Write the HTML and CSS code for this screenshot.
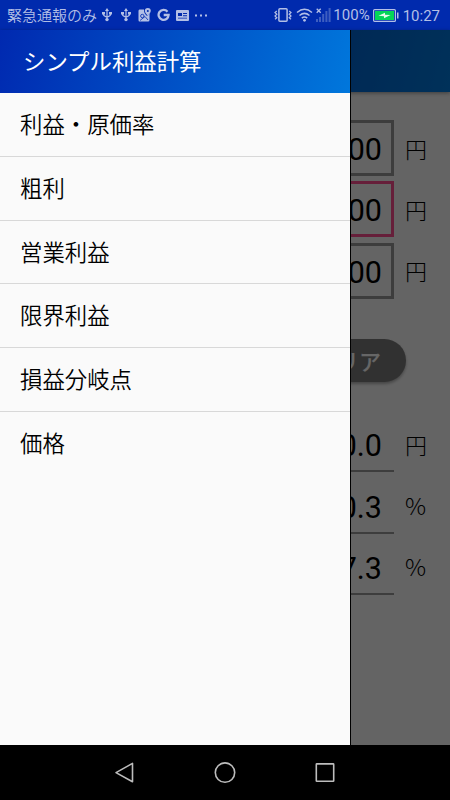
FILE: index.html
```html
<!DOCTYPE html>
<html lang="ja">
  <head>
    <meta charset="UTF-8" />
    <meta name="viewport" content="width=device-width, initial-scale=1.0" />
    <title>シンプル利益計算</title>
    <link rel="stylesheet" href="styles.css">
  </head>
  <body>
    <div class="status-bar">
      <div class="status-left">
        <span class="carrier">緊急通報のみ</span>
        <svg class="icon-usb" width="10" height="14" viewBox="0 0 10 14">
          <path d="M5 2v9M1.500 5v1.500q0 1.500 3.500 2.600q3.500-1.100 3.500-2.600V5" fill="none" stroke="currentColor" stroke-width="1.200" />
          <path d="M5 0l2 3H3zM0 4h3v2.500H0zM7 4h3v2.500H7z" fill="currentColor" />
          <circle cx="5" cy="11.600" r="1.700" fill="currentColor" />
        </svg>
        <svg class="icon-usb" width="10" height="14" viewBox="0 0 10 14">
          <path d="M5 2v9M1.500 5v1.500q0 1.500 3.500 2.600q3.500-1.100 3.500-2.600V5" fill="none" stroke="currentColor" stroke-width="1.200" />
          <path d="M5 0l2 3H3zM0 4h3v2.500H0zM7 4h3v2.500H7z" fill="currentColor" />
          <circle cx="5" cy="11.600" r="1.700" fill="currentColor" />
        </svg>
        <svg class="icon-map" width="13" height="14" viewBox="0 0 13 14">
          <path d="M1.500 1.500H6q-.4 3.500 3 6.500q1.200-.8 2.500-2.500V12q0 1.500-1.500 1.500H1.500Q.5 13.500.5 12V3q0-1.500 1-1.500z" fill="currentColor" />
          <path d="M9.800 0a3 3 0 0 1 3 3q0 1.800-3 4.800q-3-3-3-4.800a3 3 0 0 1 3-3z" fill="currentColor" />
          <circle cx="9.800" cy="2.900" r="1" fill="#002aad" />
          <circle cx="4.300" cy="8" r="1.700" fill="none" stroke="#002aad" stroke-width=".8" />
          <path d="M2 12.500l5-4l3 3.500" fill="none" stroke="#002aad" stroke-width=".8" />
        </svg>
        <svg class="icon-g" width="13" height="14" viewBox="0 0 13 14">
          <path d="M10.500 3.700A5 5 0 1 0 11.600 7H6.700" fill="none" stroke="currentColor" stroke-width="2.300" />
        </svg>
        <svg class="icon-news" width="13" height="11" viewBox="0 0 13 11">
          <rect width="13" height="11" rx="1" fill="currentColor" />
          <path d="M2 3h4v3H2zM7 3h4v1H7zM7 5.200h4v1H7zM2 7.800h9v.8H2z" fill="#002aad" />
        </svg>
        <svg class="icon-more" width="12" height="3" viewBox="0 0 12 3">
          <path d="M0 .5h2v2H0zM5 .5h2v2H5zM10 .5h2v2h-2z" fill="currentColor" />
        </svg>
      </div>
      <div class="status-right">
        <svg class="icon-vibrate" width="18" height="14" viewBox="0 0 18 14">
          <rect x="4.900" y=".8" width="8.200" height="12.400" rx="1" fill="none" stroke="currentColor" stroke-width="1.500" />
          <path d="M2.800 3L1 4.500l1.800 1.700L1 8l1.800 1.700L1 11.200M15.200 3L17 4.500l-1.800 1.700L17 8l-1.800 1.700l1.800 1.500" fill="none" stroke="currentColor" stroke-width="1.200" />
        </svg>
        <svg class="icon-wifi" width="17" height="14" viewBox="0 0 17 14">
          <path d="M1 4.500q7.500-6.500 15 0M3.500 7.500q5-4.200 10 0M5.800 10.200q2.700-2.200 5.400 0" fill="none" stroke="currentColor" stroke-width="1.500" />
          <circle cx="8.500" cy="12.300" r="1.400" fill="currentColor" />
        </svg>
        <svg class="icon-signal" width="15" height="14" viewBox="0 0 15 14">
          <path d="M.7.700l4 4M4.700.7l-4 4" stroke="currentColor" stroke-width="1.300" />
          <path d="M0 11h2v3H0zM3 9h2v5H3zM6.200 6h2v8h-2zM9.400 3h2v11h-2zM12.600 0h2v14h-2z" fill="currentColor" opacity=".35" />
        </svg>
        <span class="battery-level">100%</span>
        <svg class="icon-battery" width="26" height="13" viewBox="0 0 26 13">
          <rect x=".6" y=".6" width="21.800" height="11.800" rx="1" fill="none" stroke="currentColor" stroke-width="1.200" />
          <rect x="2" y="2" width="19" height="9" fill="#04d558" />
          <path d="M5.500 6.800l6.500-3v2l5.500.3l-6.500 3.100V7.200z" fill="#e4fbea" />
          <path d="M24 3.500h1.500v6H24z" fill="currentColor" />
        </svg>
        <span class="clock">10:27</span>
      </div>
    </div>

    <div class="screen">
      <main class="content">
        <header class="app-bar"></header>
        <form class="calc">
          <div class="calc-row">
            <div class="field">1000</div>
            <span class="unit">円</span>
          </div>
          <div class="calc-row">
            <div class="field field-active">700</div>
            <span class="unit">円</span>
          </div>
          <div class="calc-row">
            <div class="field">100</div>
            <span class="unit">円</span>
          </div>
          <div class="calc-actions">
            <button type="button" class="btn-clear">クリア</button>
          </div>
          <div class="calc-row">
            <div class="result">300.0</div>
            <span class="unit">円</span>
          </div>
          <div class="calc-row">
            <div class="result">30.3</div>
            <span class="unit unit-percent">%</span>
          </div>
          <div class="calc-row">
            <div class="result">67.3</div>
            <span class="unit unit-percent">%</span>
          </div>
        </form>
      </main>

      <div class="scrim"></div>

      <nav class="drawer">
        <h1 class="drawer-title">シンプル利益計算</h1>
        <ul class="drawer-menu">
          <li>利益・原価率</li>
          <li>粗利</li>
          <li>営業利益</li>
          <li>限界利益</li>
          <li>損益分岐点</li>
          <li>価格</li>
        </ul>
      </nav>
    </div>

    <div class="nav-bar">
      <svg width="22" height="22" viewBox="0 0 22 22">
        <path d="M18.500 1.400v18.400L2 10.600z" fill="none" stroke="#bdbdbd" stroke-width="1.600" stroke-linejoin="round" />
      </svg>
      <svg width="22" height="22" viewBox="0 0 22 22">
        <circle cx="11" cy="10.600" r="9.700" fill="none" stroke="#bdbdbd" stroke-width="1.600" />
      </svg>
      <svg width="22" height="22" viewBox="0 0 22 22">
        <rect x="2.300" y="1.900" width="17.400" height="17.400" rx=".5" fill="none" stroke="#bdbdbd" stroke-width="1.600" />
      </svg>
    </div>
  </body>
</html>
```
FILE: styles.css
```css
* {
  box-sizing: border-box;
}

body {
  display: flex;
  flex-direction: column;
  width: 450px;
  height: 800px;
  margin: 0;
  overflow: hidden;
  font-family: 'Noto Sans CJK JP', sans-serif;
  font-weight: 350;
  color: #000;
}

svg {
  display: block;
  flex: none;
}

/* Status bar */
.status-bar {
  display: flex;
  justify-content: space-between;
  height: 30px;
  padding: 0 10px 0 7px;
  background-color: #002aad;
  color: #b3bfe6;
  font-family: Roboto, 'Noto Sans CJK JP', sans-serif;
  font-size: 15px;
  line-height: 30px;
}

.status-left,
.status-right {
  display: flex;
  align-items: center;
  white-space: nowrap;
}

.status-right {
  font-weight: 400;
}

.carrier {
  padding-top: 1px;
}

.icon-usb {
  margin-left: 5px;
}

.icon-usb + .icon-usb {
  margin-left: 9px;
}

.icon-map {
  margin-left: 7px;
}

.icon-g {
  margin-left: 6px;
}

.icon-news,
.icon-more {
  margin-left: 6px;
}

.icon-wifi {
  margin-left: 4px;
}

.icon-signal {
  margin: 0 2px 0 3px;
}

.icon-battery {
  margin: 0 4px 0 3px;
}

.clock {
  padding-top: 1px;
}

/* Content behind the drawer */
.screen {
  position: relative;
  flex: 1;
}

.content {
  height: 100%;
  background-color: #fafafa;
}

.app-bar {
  height: 62px;
  background: linear-gradient(105deg, #0029b0, #007be0);
  box-shadow: 0 1px 4px rgba(0, 0, 0, 0.4);
}

.calc {
  padding: 28px 24px 0 20px;
}

.calc-row {
  display: flex;
  align-items: center;
  gap: 11px;
  height: 56px;
  margin-bottom: 5.400px;
}

.field,
.result {
  flex: 1;
  height: 56px;
  padding-right: 9px;
  border: 3px solid #989898;
  font-family: Roboto, sans-serif;
  font-size: 30.500px;
  font-weight: 400;
  line-height: 53px;
  text-align: right;
}

.field-active {
  border-color: #ff4f92;
}

.result {
  padding-right: 12px;
  border-width: 0 0 2px;
  line-height: 59px;
}

.unit {
  width: 21px;
  padding-bottom: 1px;
  font-size: 22px;
  font-weight: 300;
  text-align: center;
}

.unit-percent {
  font-size: 23.500px;
}

.calc-actions {
  display: flex;
  justify-content: flex-end;
  padding: 35px 0 34px;
}

.btn-clear {
  width: 182px;
  height: 43px;
  margin-right: 20px;
  padding: 0 25px 2px 0;
  border: 0;
  border-radius: 22px;
  background-color: #7c7c7c;
  box-shadow: 0 2px 3px rgba(0, 0, 0, 0.3);
  color: #fff;
  font: 500 22px 'Noto Sans CJK JP', sans-serif;
  text-align: right;
}

.scrim {
  position: absolute;
  inset: 0;
  background-color: rgba(0, 0, 0, 0.6);
}

/* Drawer */
.drawer {
  position: absolute;
  top: 0;
  bottom: 0;
  left: 0;
  width: 351px;
  border-right: 1px solid #000;
  background-color: #fafafa;
}

.drawer-title {
  height: 63px;
  margin: 0;
  padding-left: 23px;
  background: linear-gradient(105deg, #0029b0, #0077dc);
  color: #fff;
  font-size: 22.400px;
  font-weight: 400;
  line-height: 60px;
}

.drawer-menu {
  margin: 0;
  padding: 0;
  list-style: none;
}

.drawer-menu li {
  height: 63.800px;
  padding-left: 20px;
  border-bottom: 1.500px solid #d8d8d8;
  font-size: 22.400px;
  line-height: 61px;
}

.drawer-menu li:last-child {
  border-bottom: 0;
}

/* Android buttons */
.nav-bar {
  display: flex;
  justify-content: center;
  align-items: center;
  gap: 78px;
  height: 55px;
  background-color: #000;
}
```
